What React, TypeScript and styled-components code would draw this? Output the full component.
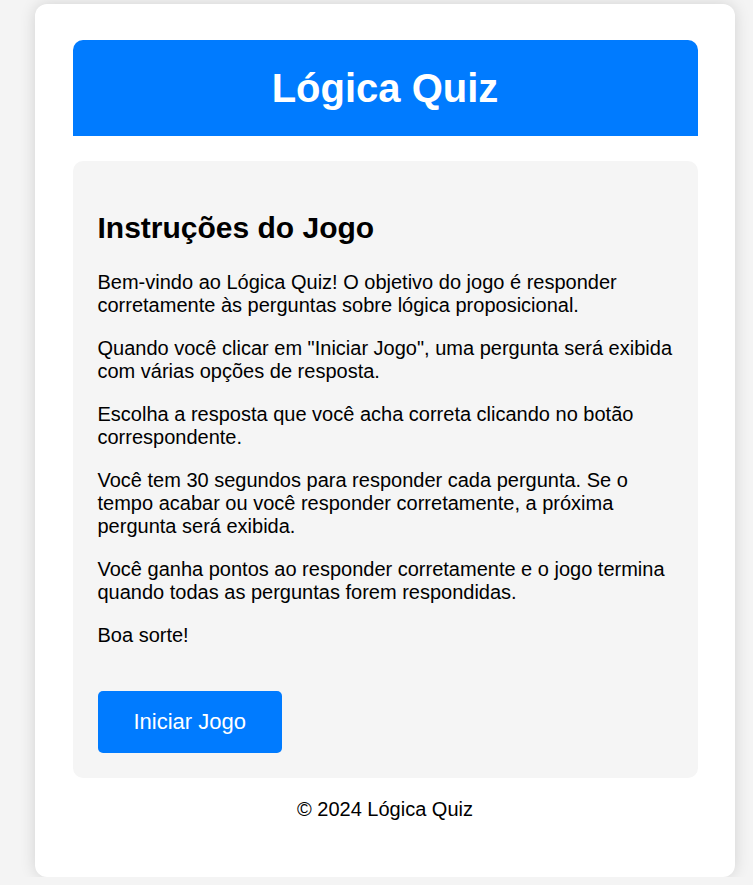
import React from 'react';
import styled, { createGlobalStyle } from 'styled-components';

const GlobalStyle = createGlobalStyle`
  body {
    margin: 0;
    background: #f4f4f4;
    font-family: "Liberation Sans", Arial, sans-serif;
    color: #000;
  }
`;

const Container = styled.div`
  box-sizing: border-box;
  width: 700px;
  margin: 4px 0 0 35px;
  padding: 36px 37.5px;
  background: #fff;
  border-radius: 12px;
  box-shadow: 0 0 16px rgba(0, 0, 0, 0.14);
`;

const Header = styled.header`
  background: #007bff;
  border-radius: 10px 10px 0 0;
  padding: 25.5px 0;
  text-align: center;
`;

const Title = styled.h1`
  margin: 0;
  font-size: 40px;
  font-weight: bold;
  color: #fff;
`;

const Instructions = styled.main`
  margin-top: 25px;
  padding: 25px;
  background: #f5f5f5;
  border-radius: 10px;
`;

const Heading = styled.h2`
  margin: 25px 0 26px;
  font-size: 30px;
  font-weight: bold;
`;

const Paragraph = styled.p`
  margin: 20px 0;
  font-size: 20px;
`;

const ButtonRow = styled.div`
  display: flex;
  margin-top: 44px;
`;

const StartButton = styled.button`
  padding: 18px 36px;
  border: none;
  border-radius: 5px;
  background: #007bff;
  color: #fff;
  font-family: "Liberation Sans", Arial, sans-serif;
  font-size: 22px;
  cursor: pointer;
`;

const Footer = styled.footer`
  margin: 20px 0;
  text-align: center;
  font-size: 20px;
`;

const paragraphs = [
  'Bem-vindo ao Lógica Quiz! O objetivo do jogo é responder corretamente às perguntas sobre lógica proposicional.',
  'Quando você clicar em "Iniciar Jogo", uma pergunta será exibida com várias opções de resposta.',
  'Escolha a resposta que você acha correta clicando no botão correspondente.',
  'Você tem 30 segundos para responder cada pergunta. Se o tempo acabar ou você responder corretamente, a próxima pergunta será exibida.',
  'Você ganha pontos ao responder corretamente e o jogo termina quando todas as perguntas forem respondidas.',
  'Boa sorte!',
];

const App: React.FC = () => {
  return (
    <>
      <GlobalStyle />
      <Container>
        <Header>
          <Title>Lógica Quiz</Title>
        </Header>
        <Instructions>
          <Heading>Instruções do Jogo</Heading>
          {paragraphs.map((text, i) => (
            <Paragraph key={i}>{text}</Paragraph>
          ))}
          <ButtonRow>
            <StartButton>Iniciar Jogo</StartButton>
          </ButtonRow>
        </Instructions>
        <Footer>© 2024 Lógica Quiz</Footer>
      </Container>
    </>
  );
};

export default App;
